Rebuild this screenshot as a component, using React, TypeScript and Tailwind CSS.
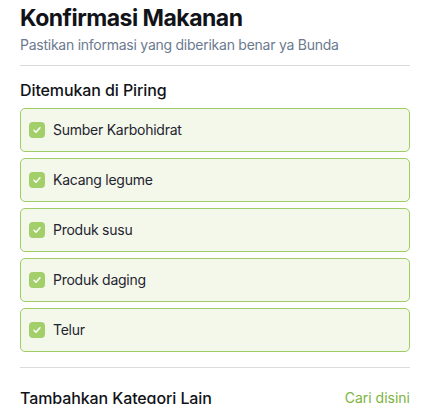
import React from 'react';

const FOUND_ITEMS = ['Sumber Karbohidrat', 'Kacang legume', 'Produk susu', 'Produk daging', 'Telur'];

const CheckBox: React.FC = () => (
  <span className="flex h-4 w-4 shrink-0 items-center justify-center rounded-[4px] bg-[#a3cf6a]">
    <svg width="10" height="10" viewBox="0 0 10 10" fill="none">
      <path d="M2 5.2l2 2 4-4.4" stroke="#ffffff" strokeWidth="1.5" strokeLinecap="round" strokeLinejoin="round" />
    </svg>
  </span>
);

export default function App() {
  return (
    <div className="h-[404px] w-[430px] overflow-hidden bg-white px-5 font-['Inter',sans-serif]">
      <h1 className="pt-[2px] text-[23px] font-bold leading-[32px] tracking-[-0.5px] text-[#111318]">
        Konfirmasi Makanan
      </h1>
      <p className="mt-[1px] text-[14px] leading-[20px] tracking-[-0.25px] text-[#6b7a90]">
        Pastikan informasi yang diberikan benar ya Bunda
      </p>
      <div className="mt-[10px] h-px bg-[#d9dbdf]" />

      <h2 className="mt-[12px] text-[16px] font-medium leading-[24px] tracking-[-0.1px] text-[#111318]">
        Ditemukan di Piring
      </h2>
      <div className="mt-[6px] flex flex-col gap-[6px]">
        {FOUND_ITEMS.map((item) => (
          <label
            key={item}
            className="flex h-[44px] items-center gap-2 rounded-[5px] border border-[#9fcc66] bg-[#f4f8eb] px-2"
          >
            <CheckBox />
            <span className="text-[14px] leading-[20px] tracking-[-0.25px] text-[#1f2430]">{item}</span>
          </label>
        ))}
      </div>

      <div className="mt-[15px] h-px bg-[#d9dbdf]" />
      <div className="mt-[18px] flex items-center justify-between">
        <span className="text-[16px] font-medium leading-[24px] tracking-[-0.1px] text-[#111318]">
          Tambahkan Kategori Lain
        </span>
        <a className="text-[14px] leading-[20px] text-[#7cb342] underline decoration-[#9fcc66] underline-offset-[3px]">
          Cari disini
        </a>
      </div>
    </div>
  );
}
